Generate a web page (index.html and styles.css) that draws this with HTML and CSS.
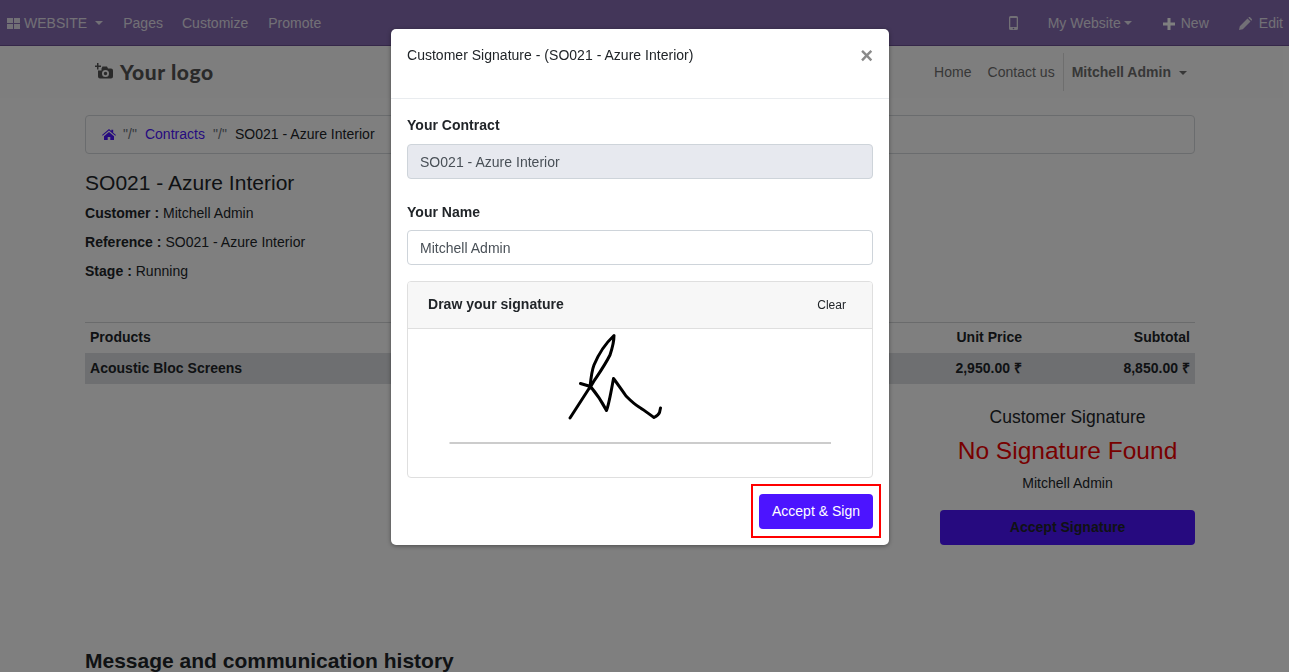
FILE: index.html
```html
<!DOCTYPE html>
<html lang="en">
<head>
<meta charset="utf-8">
<title>Customer Signature</title>
<link rel="stylesheet" href="styles.css">
</head>
<body>
<div class="page">
  <nav class="topbar">
    <div class="topbar-group">
      <span class="top-item top-brand">
        <svg class="ico-grid" viewBox="0 0 13 11"><path d="M0 0h6v5H0zM7 0h6v5H7zM0 6h6v5H0zM7 6h6v5H7z"/></svg>WEBSITE<i class="caret caret-brand"></i>
      </span>
      <span class="top-item">Pages</span>
      <span class="top-item">Customize</span>
      <span class="top-item">Promote</span>
    </div>
    <div class="topbar-group topbar-right">
      <svg class="ico-phone" viewBox="0 0 9 14"><path fill-rule="evenodd" d="M1.5 0h6A1.5 1.5 0 0 1 9 1.5v11A1.5 1.5 0 0 1 7.500 14h-6A1.500 1.500 0 0 1 0 12.500v-11A1.500 1.500 0 0 1 1.500 0zM1.300 2v9h6.400V2zM4.500 11.700a.8.8 0 1 0 0 1.600a.8.8 0 0 0 0-1.600z"/></svg>
      <span class="top-item top-site">My Website<i class="caret"></i></span>
      <span class="top-item top-new"><svg class="ico-plus" viewBox="0 0 12 12"><path d="M4.500 0h3v4.500H12v3H7.500V12h-3V7.500H0v-3h4.500z"/></svg>New</span>
      <span class="top-item top-edit"><svg class="ico-pencil" viewBox="0 0 13 13"><path d="M0 13l.8-3.800L8.500 1.500l3 3-7.700 7.700zM9.300.7l.5-.5a1 1 0 0 1 1.300 0l1.700 1.700a1 1 0 0 1 0 1.300l-.5.500z"/></svg>Edit</span>
    </div>
  </nav>

  <header class="site-header">
    <div class="logo">
      <svg class="ico-camera" viewBox="0 0 18 16"><path fill-rule="evenodd" d="M2 0h1.500v2.500H6V4H3.500v2.500H2V4H0V2.500h2zM7.500 3.500h4.500l1 2h3a2 2 0 0 1 2 2v6a2 2 0 0 1-2 2H5a2 2 0 0 1-2-2V7.500h3.500V5.500zM10.500 7a3.500 3.500 0 1 0 0 7a3.500 3.500 0 0 0 0-7zM10.500 8.800a1.700 1.700 0 1 1 0 3.400a1.700 1.700 0 0 1 0-3.400z"/></svg>
      <span>Your logo</span>
    </div>
    <div class="site-menu">
      <span>Home</span>
      <span>Contact us</span>
      <span class="site-user">Mitchell Admin<i class="caret caret-user"></i></span>
    </div>
  </header>

  <main class="content">
    <div class="breadcrumb">
      <svg class="ico-home" viewBox="0 0 14 11"><path d="M7 0l2.300 2V.8h1.900v2.900L14 6l-.7.800L7 1.500.7 6.800 0 6zM2 7.200L7 3l5 4.200V11H8.300V7.900H5.700V11H2z"/></svg>
      <span class="crumb-sep">"/"</span>
      <span class="crumb-link">Contracts</span>
      <span class="crumb-sep">"/"</span>
      <span>SO021 - Azure Interior</span>
    </div>
    <h1 class="title">SO021 - Azure Interior</h1>
    <p class="meta"><b>Customer :</b> Mitchell Admin</p>
    <p class="meta"><b>Reference :</b> SO021 - Azure Interior</p>
    <p class="meta"><b>Stage :</b> Running</p>

    <div class="table">
      <div class="row row-head">
        <span class="cell-name">Products</span>
        <span class="cell-price">Unit Price</span>
        <span class="cell-total">Subtotal</span>
      </div>
      <div class="row row-item">
        <span class="cell-name">Acoustic Bloc Screens</span>
        <span class="cell-price">2,950.00 ₹</span>
        <span class="cell-total">8,850.00 ₹</span>
      </div>
    </div>

    <div class="sign-wrap">
      <div class="sign-box">
        <div class="sign-title">Customer Signature</div>
        <div class="sign-none">No Signature Found</div>
        <div class="sign-name">Mitchell Admin</div>
        <div class="sign-btn">Accept Signature</div>
      </div>
    </div>

    <h2 class="history">Message and communication history</h2>
  </main>
</div>

<div class="backdrop"></div>

<section class="modal">
  <div class="modal-head">
    <span class="modal-title">Customer Signature - (SO021 - Azure Interior)</span>
    <span class="modal-close">×</span>
  </div>
  <div class="modal-body">
    <label class="field-label">Your Contract</label>
    <div class="input input-off">SO021 - Azure Interior</div>
    <label class="field-label field-label-2">Your Name</label>
    <div class="input">Mitchell Admin</div>
    <div class="sig-card">
      <div class="sig-head">
        <b>Draw your signature</b>
        <span class="sig-clear">Clear</span>
      </div>
      <svg class="sig-canvas" viewBox="0 0 464 148">
        <path class="sig-ink" d="M162 89L182 58C183 48 184 41 186 36C191 24 198 14 206 6.500C206 14 204 20 202 26C197 36 190 46 186 52L181.500 59.500M172.500 54.500L182.500 57.500C188 64 193 71 198.500 81.500C201 75 203 63 205.500 49.500C209 54 213 60 218 67C223 72 226 75 231 78C236 81 241 85 246 88.500C249 87 251 85 251.500 83.500L252.500 79"/>
        <path class="sig-line" d="M41.500 114H423"/>
      </svg>
    </div>
    <div class="modal-actions">
      <button class="accept-btn" type="button">Accept &amp; Sign</button>
    </div>
  </div>
  <div class="highlight"></div>
</section>
</body>
</html>
```
FILE: styles.css
```css
* { box-sizing: border-box; }
html, body { margin: 0; height: 672px; overflow: hidden; }
body {
  font-family: "Liberation Sans", Arial, sans-serif;
  font-size: 14px;
  line-height: 21px;
  letter-spacing: .02px;
  color: #212529;
  background: #fff;
}
.page { width: 1289px; height: 672px; overflow: hidden; }

.topbar {
  height: 46px;
  background: #866cb2;
  border-bottom: 1px solid #6b4f93;
  display: flex;
  justify-content: space-between;
  align-items: center;
  color: #fff;
  padding: 2px 6px 0 7px;
}
.topbar-group { display: flex; align-items: center; }
.top-item { color: #e4e0ec; white-space: nowrap; display: flex; align-items: center; }
.top-brand { margin-right: 20px; }
.top-brand + .top-item { margin-right: 19px; }
.top-brand + .top-item + .top-item { margin-right: 20px; }
.ico-grid { width: 13px; height: 11px; fill: #e4e0ec; margin-right: 4px; }
.ico-phone { width: 9px; height: 14px; fill: #e4e0ec; margin-right: 30px; margin-top: -1px; }
.ico-plus { width: 12px; height: 12px; fill: #fff; margin-right: 6px; }
.ico-pencil { width: 13px; height: 13px; fill: #e4e0ec; margin-right: 7px; }
.top-site { margin-right: 31px; }
.top-new { margin-right: 30px; }
.caret {
  display: inline-block;
  width: 0;
  height: 0;
  border-top: 4.500px solid currentColor;
  border-left: 4.500px solid transparent;
  border-right: 4.500px solid transparent;
  margin-left: 3px;
  margin-top: -2px;
}
.caret-brand { margin-left: 8px; }
.caret-user { margin-left: 8px; display: inline-block; vertical-align: 2px; }

.site-header {
  width: 1283px;
  height: 52px;
  background: #fdfdfd;
  display: flex;
  justify-content: space-between;
  align-items: center;
  padding: 0 96px 0 85px;
}
.logo {
  display: flex;
  align-items: center;
  color: #555;
  font-family: Lato, sans-serif;
  font-weight: 900;
  font-size: 21px;
  letter-spacing: .6px;
  margin-left: 10px;
  margin-top: -2px;
}
.ico-camera { width: 18px; height: 16px; fill: #555; margin-right: 7px; margin-top: -1px; }
.site-menu { display: flex; align-items: center; color: #6f6f6f; height: 38px; }
.site-menu span { margin-left: 16px; }
.site-menu .site-user {
  margin-left: 8px;
  height: 38px;
  line-height: 38px;
  padding-left: 8px;
  border-left: 1px solid #dcdcdc;
  font-weight: 700;
  color: #6f6f6f;
}

.content { width: 1110px; margin-left: 85px; }
.breadcrumb {
  margin-top: 17px;
  height: 39px;
  display: flex;
  align-items: center;
  padding: 0 16px;
  border: 1px solid #d5d8dc;
  border-radius: 4px;
  background: #fff;
}
.ico-home { width: 14px; height: 11px; fill: #4c14ff; margin-right: 7px; }
.crumb-sep { color: #6c757d; margin-right: 8px; }
.crumb-link { color: #4c14ff; margin-right: 8px; }
.title { font-size: 21px; line-height: 25px; font-weight: 400; margin: 16px 0 0; }
.meta { margin: 8px 0 0; }

.table { margin-top: 40px; border-top: 1px solid #d4d6d8; }
.row { display: flex; padding: 0 5px; font-weight: 700; height: 30px; align-items: center; }
.row-head { padding-bottom: 2px; }
.row-item { background: #dcdee2; height: 31px; }
.cell-name { flex: 1; }
.cell-price { width: 200px; text-align: right; }
.cell-total { width: 168px; text-align: right; }

.sign-wrap { display: flex; justify-content: flex-end; }
.sign-box { width: 255px; text-align: center; margin-top: 23px; }
.sign-title { font-size: 17.500px; line-height: 21px; }
.sign-none { font-size: 24.500px; line-height: 29px; color: #f00000; margin-top: 8px; }
.sign-name { margin-top: 8px; }
.sign-btn {
  margin-top: 16px;
  height: 35px;
  line-height: 35px;
  background: #4c14ff;
  border-radius: 4px;
  font-weight: 700;
}
.history { font-size: 21px; line-height: 25px; font-weight: 700; letter-spacing: 0; margin: 103px 0 0; }

.backdrop { position: fixed; inset: 0; background: rgba(0, 0, 0, .5); }

.modal {
  position: absolute;
  left: 391px;
  top: 29px;
  width: 498px;
  height: 516px;
  background: #fff;
  border-radius: 5px;
  box-shadow: 0 1px 4px rgba(0, 0, 0, .4);
}
.modal-head {
  height: 70px;
  border-bottom: 1px solid #e9ecef;
  display: flex;
  justify-content: space-between;
  padding: 16px 16px 0;
}
.modal-title { line-height: 21px; }
.modal-close { font-size: 22px; font-weight: 700; color: #8a8a8a; line-height: 21px; }
.modal-body { padding: 16px; }
.field-label { display: block; font-weight: 700; line-height: 21px; }
.field-label-2 { margin-top: 23px; }
.input {
  margin-top: 8px;
  height: 35px;
  line-height: 35px;
  padding: 0 12px;
  border: 1px solid #ced4da;
  border-radius: 4px;
  color: #495057;
}
.field-label-2 + .input { margin-top: 7px; }
.input-off { background: #e7e9ef; }
.sig-card {
  margin-top: 16px;
  height: 197px;
  border: 1px solid #dfdfdf;
  border-radius: 4px;
  overflow: hidden;
}
.sig-head {
  height: 47px;
  padding: 0 26px 2px 20px;
  display: flex;
  justify-content: space-between;
  align-items: center;
  background: #f7f7f7;
  border-bottom: 1px solid #dfdfdf;
}
.sig-clear { font-size: 12px; padding-top: 2px; }
.sig-canvas { display: block; width: 464px; height: 148px; }
.sig-ink { fill: none; stroke: #000; stroke-width: 3; stroke-linecap: round; stroke-linejoin: round; }
.sig-line { fill: none; stroke: #ccc; stroke-width: 2; }
.modal-actions { display: flex; justify-content: flex-end; margin-top: 16px; }
.accept-btn {
  height: 35px;
  width: 114px;
  border: 0;
  border-radius: 4px;
  background: #4c14ff;
  color: #fff;
  font: inherit;
  letter-spacing: inherit;
  padding: 0;
}
.highlight {
  position: absolute;
  left: 360px;
  top: 455px;
  width: 130px;
  height: 54px;
  border: 2px solid #f00;
}
```
